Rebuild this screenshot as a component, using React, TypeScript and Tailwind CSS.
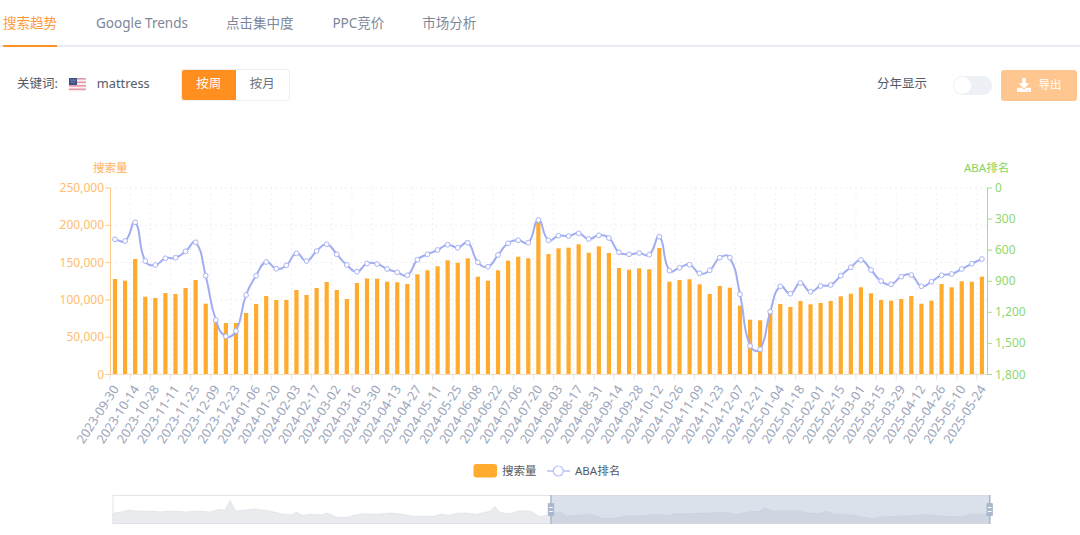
import { FaDownload } from "react-icons/fa";

const FONT = '"Noto Sans", "Noto Sans CJK SC", sans-serif';

// bar tops and line points are in screen px, read off the chart
const BAR_TOPS = [
  279, 280.7, 259, 296.7, 298, 293, 294, 288, 280, 303.7, 320, 323, 323, 313, 304, 296, 300, 300, 290, 295, 288, 282, 290,
  299, 283, 278.5, 278.7, 281.7, 282.3, 284, 274.3, 270.3, 266.3, 260.3, 262.7, 258.3, 276.7, 280.7, 270.3, 260.7, 256.7,
  258.3, 221.7, 254, 248.3, 247.7, 244.3, 252.7, 246.3, 253, 268, 269.7, 268.3, 269.3, 248, 281.7, 280, 279.3, 284.3, 294,
  286, 287.7, 305.7, 319.7, 320.3, 311.7, 304, 307, 301, 304.3, 303, 301, 296.3, 293.7, 287.3, 293.3, 300, 300.7, 299, 296,
  303.7, 300.7, 284, 287.3, 281.3, 281.7, 276.7,
];

const LINE_YS = [
  239.3, 241, 222.3, 261, 265, 258.3, 257.7, 251.3, 242.3, 275.7, 320, 336.3, 331, 295, 275.7, 262, 268.7, 265.3, 253.3, 261,
  251, 244.3, 254.3, 265, 271.7, 263.5, 264, 269, 272.3, 275.3, 259.7, 254.3, 250, 244.7, 247.7, 242.7, 262.3, 266.7, 255,
  243.3, 240.3, 242.7, 220, 240.3, 235.7, 236, 233.3, 239, 235.3, 238, 252.3, 254.3, 253, 254.7, 236.7, 270.7, 267.7, 264.7,
  273.3, 270.3, 257.7, 257.7, 294.3, 346, 349.3, 311.7, 286.3, 293.7, 283, 291.7, 286, 285, 275.7, 267.3, 260, 270, 281, 284.3,
  276.7, 275, 286.3, 281.7, 275.3, 274, 269, 263.7, 259,
];

// overview silhouette, [x, y] in screen px
const OVERVIEW: [number, number][] = [
  [113, 513.3], [120, 512.3], [128.3, 510], [136.7, 511], [153.3, 511.3], [160, 512], [170, 511], [186.7, 512], [196.7, 511],
  [210, 512], [220, 509.3], [225, 510], [230, 500.3], [235.7, 511], [255, 509], [270, 511], [283.3, 514.3], [291.7, 514.7],
  [296.7, 512], [301.7, 515.3], [311.7, 514.3], [321.7, 515], [326.7, 513], [336.7, 517.3], [346.7, 517.3], [356.7, 514.7],
  [363.3, 513.7], [376.7, 514.3], [390, 513], [403.3, 514.3], [413.3, 516.3], [433.3, 516.3], [440, 514.3], [450, 515.3],
  [456.7, 513.3], [466.7, 513], [476.7, 514.3], [486.7, 512], [490, 511], [495, 506.3], [500, 512.7], [510, 513.7], [518.3, 511],
  [530, 511], [540, 516.7], [550.7, 514.3], [560, 512], [566.7, 516], [591.7, 514.3], [601.7, 518.3], [613.3, 518.3], [626.7, 516],
  [643.3, 515.7], [658.3, 514.3], [668.3, 516], [673.3, 514], [703.3, 513.3], [723.3, 512], [736.7, 514.3], [750, 511.7], [760, 511.3],
  [765, 508], [771.7, 511], [796.7, 510.7], [810, 513.3], [820, 513.3], [826.7, 511], [833.3, 514.3], [843.3, 514.3], [853.3, 515.3],
  [873.3, 518.7], [883.3, 516.7], [906.7, 516], [926.7, 514.7], [943.3, 516.3], [963.3, 516.7], [970, 514.3], [989.5, 514.3],
];

const X_STEP = 10.08;
const barX = (i: number) => 115 + i * X_STEP;

const DATES = BAR_TOPS.map((_, i) => {
  const d = new Date(Date.UTC(2023, 8, 30 + i * 7));
  return d.toISOString().slice(0, 10);
});

// same split-by-distance smoothing the chart library uses
function smoothPath(ys: number[]) {
  const pts = ys.map((y, i) => [barX(i), y]);
  const handles = pts.map((p, i) => {
    const prev = pts[Math.max(i - 1, 0)];
    const next = pts[Math.min(i + 1, pts.length - 1)];
    const d0 = Math.hypot(p[0] - prev[0], p[1] - prev[1]);
    const d1 = Math.hypot(next[0] - p[0], next[1] - p[1]);
    const sum = d0 + d1 || 1;
    const vx = next[0] - prev[0];
    const vy = next[1] - prev[1];
    return {
      inX: p[0] - (vx * 0.5 * d0) / sum,
      inY: p[1] - (vy * 0.5 * d0) / sum,
      outX: p[0] + (vx * 0.5 * d1) / sum,
      outY: p[1] + (vy * 0.5 * d1) / sum,
    };
  });
  let d = `M${pts[0][0]} ${pts[0][1]}`;
  for (let i = 0; i < pts.length - 1; i++) {
    const a = handles[i];
    const b = handles[i + 1];
    d += ` C${a.outX.toFixed(1)} ${a.outY.toFixed(1)} ${b.inX.toFixed(1)} ${b.inY.toFixed(1)} ${pts[i + 1][0].toFixed(1)} ${pts[i + 1][1].toFixed(1)}`;
  }
  return d;
}

const LEFT_TICKS = ["250,000", "200,000", "150,000", "100,000", "50,000", "0"];
const RIGHT_TICKS = ["0", "300", "600", "900", "1,200", "1,500", "1,800"];
const TOP_Y = 188;
const BOTTOM_Y = 374.5;

function overviewArea(points: [number, number][]) {
  const line = points.map(([x, y]) => `${x} ${y}`).join(" L");
  return `M${line} L${points[points.length - 1][0]} 523.5 L${points[0][0]} 523.5 Z`;
}

function Handle({ x }: { x: number }) {
  return (
    <g>
      <line x1={x} x2={x} y1={495} y2={524} stroke="#a9b8cd" strokeWidth={1.5} />
      <rect x={x - 3.2} y={503} width={6.4} height={13} rx={1} fill="#a9b8cd" />
      <line x1={x - 1.8} x2={x + 1.8} y1={507.5} y2={507.5} stroke="#fff" />
      <line x1={x - 1.8} x2={x + 1.8} y1={511.5} y2={511.5} stroke="#fff" />
    </g>
  );
}

function Chart() {
  return (
    <svg
      className="block"
      width={1080}
      height={385}
      viewBox="0 150 1080 385"
      style={{ fontFamily: FONT }}
    >
      {/* grid */}
      {LEFT_TICKS.slice(0, 5).map((_, i) => {
        const y = TOP_Y + (i * (BOTTOM_Y - TOP_Y)) / 5;
        return <line key={i} x1={110} x2={987} y1={y} y2={y} stroke="#eef0f5" strokeDasharray="2 3" />;
      })}
      {BAR_TOPS.map((_, i) =>
        i % 2 === 0 && i > 0 ? (
          <line
            key={i}
            x1={barX(i) - 5}
            x2={barX(i) - 5}
            y1={TOP_Y}
            y2={BOTTOM_Y}
            stroke="#eef0f5"
            strokeDasharray="2 3"
          />
        ) : null,
      )}

      {/* bars */}
      {BAR_TOPS.map((top, i) => (
        <rect key={i} x={barX(i) - 2.1} y={top} width={4.2} height={BOTTOM_Y - top} fill="#ffab2e" />
      ))}

      {/* axes */}
      <line x1={110} x2={987} y1={BOTTOM_Y} y2={BOTTOM_Y} stroke="#f5dfc0" />
      {BAR_TOPS.map((_, i) =>
        i % 2 === 0 ? (
          <line
            key={i}
            x1={barX(i) - 5}
            x2={barX(i) - 5}
            y1={BOTTOM_Y}
            y2={BOTTOM_Y + 5}
            stroke="#e3e5ea"
          />
        ) : null,
      )}
      <line x1={110.5} x2={110.5} y1={TOP_Y} y2={BOTTOM_Y} stroke="#ffca8a" />
      <line x1={987.5} x2={987.5} y1={TOP_Y} y2={BOTTOM_Y} stroke="#a5dd8b" />
      {LEFT_TICKS.map((t, i) => {
        const y = TOP_Y + (i * (BOTTOM_Y - TOP_Y)) / 5;
        return (
          <g key={t}>
            <line x1={105} x2={110} y1={y} y2={y} stroke="#ffca8a" />
            <text x={104} y={y + 4} textAnchor="end" fontSize={12} fill="#ffbd70">
              {t}
            </text>
          </g>
        );
      })}
      {RIGHT_TICKS.map((t, i) => {
        const y = TOP_Y + (i * (BOTTOM_Y - TOP_Y)) / 6;
        return (
          <g key={t}>
            <line x1={987} x2={992} y1={y} y2={y} stroke="#a5dd8b" />
            <text x={995} y={y + 4} fontSize={12} fill="#8fd870">
              {t}
            </text>
          </g>
        );
      })}
      <text x={93} y={172} fontSize={11.5} fill="#ffb25c">
        搜索量
      </text>
      <text x={964} y={172} fontSize={11.5} fill="#82d45f">
        ABA排名
      </text>

      {/* x labels */}
      {DATES.map((date, i) =>
        i % 2 === 0 ? (
          <text
            key={date}
            x={barX(i) + 4.5}
            y={389}
            textAnchor="end"
            fontSize={12.7}
            fill="#9ca5bb"
            transform={`rotate(-57 ${barX(i) + 4.5} 389)`}
          >
            {date}
          </text>
        ) : null,
      )}

      {/* rank line */}
      <path d={smoothPath(LINE_YS)} fill="none" stroke="#a0adf2" strokeWidth={2} />
      {LINE_YS.map((y, i) => (
        <circle key={i} cx={barX(i)} cy={y} r={2.4} fill="#fff" stroke="#a8b3f4" strokeWidth={1} />
      ))}

      {/* legend */}
      <rect x={473.5} y={464} width={23.5} height={13.5} rx={3} fill="#ffab2e" />
      <text x={502} y={475} fontSize={11.5} fill="#555b66">
        搜索量
      </text>
      <line x1={547} x2={570} y1={471} y2={471} stroke="#b6bff6" strokeWidth={1.5} />
      <circle cx={558.3} cy={471} r={5} fill="#fff" stroke="#b6bff6" strokeWidth={1.2} />
      <text x={575} y={475} fontSize={11.5} fill="#555b66">
        ABA排名
      </text>

      {/* overview */}
      <rect x={113} y={495.5} width={877} height={28} fill="#fff" stroke="#e3e5e9" />
      <path d={overviewArea(OVERVIEW)} fill="#e9ebee" stroke="#dcdfe4" strokeWidth={0.6} />
      <rect x={551} y={495.5} width={439} height={28} fill="#b0bdd2" fillOpacity={0.46} />
      <Handle x={551} />
      <Handle x={989.7} />
    </svg>
  );
}

function UsFlag() {
  return (
    <svg width={17} height={13} viewBox="0 0 17 13" className="block shrink-0">
      <rect width={17} height={13} fill="#fbeef0" />
      <rect y={0} width={17} height={1.6} fill="#e69aa6" />
      <rect y={3.5} width={17} height={1.6} fill="#e69aa6" />
      <rect y={7} width={17} height={1.6} fill="#e69aa6" />
      <rect y={10.5} width={17} height={1.6} fill="#e69aa6" />
      <rect width={8} height={7} fill="#3f5288" />
      <circle cx={2} cy={2} r={0.5} fill="#c9d0e4" />
      <circle cx={4} cy={2} r={0.5} fill="#c9d0e4" />
      <circle cx={6} cy={2} r={0.5} fill="#c9d0e4" />
      <circle cx={3} cy={4} r={0.5} fill="#c9d0e4" />
      <circle cx={5} cy={4} r={0.5} fill="#c9d0e4" />
    </svg>
  );
}

export default function App() {
  return (
    <div
      className="flex h-[535px] w-[1080px] flex-col overflow-hidden bg-white"
      style={{ fontFamily: FONT }}
    >
      {/* tabs */}
      <div className="flex h-[47px] items-stretch gap-[39px] border-b-2 border-[#e8ebf1] pl-[3px] text-[13.5px] text-[#7d8799]">
        <div className="-mb-[2px] flex w-[54px] items-center justify-center whitespace-nowrap border-b-2 border-[#ff9326] pt-[2px] text-[#ff9a3c]">
          搜索趋势
        </div>
        <div className="flex items-center pt-[2px]">Google Trends</div>
        <div className="-ml-[1px] flex items-center pt-[2px]">点击集中度</div>
        <div className="flex items-center pt-[2px]">PPC竞价</div>
        <div className="-ml-[1px] flex items-center pt-[2px]">市场分析</div>
      </div>

      {/* toolbar */}
      <div className="mt-[22px] flex h-[32px] items-center pl-[17px] pr-[3px] text-[12.5px] text-[#555b66]">
        <span className="-mt-[2px]">关键词:</span>
        <span className="ml-[11px] -mt-[2px]">
          <UsFlag />
        </span>
        <span className="ml-[11px] -mt-[2px] text-[12.8px]">mattress</span>
        <div className="ml-[31px] flex h-[32px] w-[109px] overflow-hidden rounded-[3px] border border-[#eceef2]">
          <div className="flex w-[54px] items-center justify-center bg-[#ff8f1f] pb-[1px] text-white">按周</div>
          <div className="flex flex-1 items-center justify-center pb-[1px] text-[#6b7280]">按月</div>
        </div>
        <div className="ml-auto flex items-center">
          <span className="-mt-[1px]">分年显示</span>
          <div className="ml-[26px] flex h-[19px] w-[39px] items-center rounded-full bg-[#edf0f4] pl-[1px]">
            <div className="h-[17px] w-[17px] rounded-full bg-white" />
          </div>
          <div className="ml-[9px] flex h-[31px] w-[76px] items-center justify-center gap-[8px] rounded-[3px] bg-[#ffc68f] text-[11.5px] text-white">
            <FaDownload size={14} />
            <span>导出</span>
          </div>
        </div>
      </div>

      <div className="mt-[49px]">
        <Chart />
      </div>
    </div>
  );
}
